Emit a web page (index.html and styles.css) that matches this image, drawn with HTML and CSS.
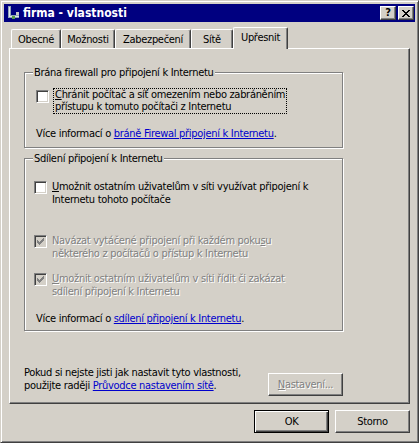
FILE: index.html
```
<!DOCTYPE html>
<html>
<head>
    <meta charset='utf-8'>
    <title>firma - vlastnosti</title>
    <meta name='viewport' content='width=device-width, initial-scale=1'>
    <link rel="stylesheet" href="styles.css">
</head>
<body>
    <div class="okno">
        <div class="titulek">
            <svg class="ikona" width="16" height="16" viewBox="0 0 16 16">
                <path d="M3 1h3v9h8v3H3z" fill="#8fa3b8"/>
                <path d="M4 2h1v9h9v1H4z" fill="#dfe6ee"/>
                <rect x="7" y="11" width="3" height="3" fill="#5b9c4b"/>
                <rect x="11" y="7" width="3" height="3" fill="#c9c9c9"/>
            </svg>
            <span class="titulek-text">firma - vlastnosti</span>
            <div class="titulek-tlacitka">
                <span class="tbtn otaznik">?</span>
                <span class="tbtn">
                    <svg width="8" height="7" viewBox="0 0 8 7">
                        <path d="M0 0h2v1h1v1h2V1h1V0h2v1H7v1H6v1H5v1h1v1h1v1h1v1H6V6H5V5H3v1H2v1H0V6h1V5h1V4h1V3H2V2H1V1H0z" fill="#000"/>
                    </svg>
                </span>
            </div>
        </div>
        <div class="obsah">
            <div class="zalozky">
                <div class="zalozka z-obecne">Obecné</div>
                <div class="zalozka z-moznosti">Možnosti</div>
                <div class="zalozka z-zabezpeceni">Zabezpečení</div>
                <div class="zalozka z-site">Sítě</div>
                <div class="zalozka z-upresnit vybrana">Upřesnit</div>
            </div>
            <div class="panel">
                <div class="skupina firewall">
                    <span class="legenda">Brána firewall pro připojení k Internetu</span>
                    <div class="volba">
                        <span class="chk"></span>
                        <span class="popis fokus"><u>C</u>hránit počítač a síť omezením nebo zabráněním<br>přístupu k tomuto počítači z Internetu</span>
                    </div>
                    <div class="info info-fw">Více informací o <a href="#">bráně Firewal připojení k Internetu</a>.</div>
                </div>
                <div class="skupina sdileni">
                    <span class="legenda">Sdílení připojení k Internetu</span>
                    <div class="volba">
                        <span class="chk"></span>
                        <span class="popis"><u>U</u>možnit ostatním uživatelům v síti využívat připojení k<br>Internetu tohoto počítače</span>
                    </div>
                    <div class="volba zakazano volba-vytacene">
                        <span class="chk">
                            <svg width="11" height="11" viewBox="0 0 11 11">
                                <path d="M2 4h1v3H2zM3 5h1v3H3zM4 6h1v3H4zM5 5h1v3H5zM6 4h1v3H6zM7 3h1v3H7zM8 2h1v3H8z" fill="#808080"/>
                            </svg>
                        </span>
                        <span class="popis">Navázat vytáčené připojení při každém poku<u>s</u>u<br>některého z počítačů o přístup k Internetu</span>
                    </div>
                    <div class="volba zakazano volba-rizeni">
                        <span class="chk">
                            <svg width="11" height="11" viewBox="0 0 11 11">
                                <path d="M2 4h1v3H2zM3 5h1v3H3zM4 6h1v3H4zM5 5h1v3H5zM6 4h1v3H6zM7 3h1v3H7zM8 2h1v3H8z" fill="#808080"/>
                            </svg>
                        </span>
                        <span class="popis"><u>U</u>možnit ostatním uživatelům v síti řídit či zakázat<br>sdílení připojení k Internetu</span>
                    </div>
                    <div class="info info-sd">Více informací o <a href="#">sdílení připojení k Internetu</a>.</div>
                </div>
                <div class="pruvodce">
                    <div class="pruvodce-text">Pokud si nejste jisti jak nastavit tyto vlastnosti,<br>použijte raději <a href="#">Průvodce nastavením sítě</a>.</div>
                    <span class="tlacitko neaktivni"><u>N</u>astavení...</span>
                </div>
            </div>
            <div class="tlacitka">
                <span class="tlacitko vychozi">OK</span>
                <span class="tlacitko">Storno</span>
            </div>
        </div>
    </div>
</body>
</html>
```
FILE: styles.css
```
html, body {
    margin: 0;
    background-color: #d4d0c8;
}
body {
    font-family: "DejaVu Sans Condensed", "DejaVu Sans", "Liberation Sans", sans-serif;
    font-stretch: condensed;
    font-size: 11px;
    letter-spacing: -0.3px;
    color: #000;
}
.okno {
    width: 419px;
    height: 443px;
    box-sizing: border-box;
    border: 1px solid;
    border-color: #d4d0c8 #404040 #404040 #d4d0c8;
    box-shadow: inset 1px 1px 0 #fff, inset -1px -1px 0 #808080;
    padding: 3px;
    background-color: #d4d0c8;
}
.titulek {
    height: 18px;
    background-color: #000080;
    display: flex;
    align-items: center;
}
.ikona {
    margin-left: 1px;
}
.titulek-text {
    margin-left: 2px;
    color: #fff;
    font-weight: bold;
    font-size: 12px;
    letter-spacing: 0;
}
.titulek-tlacitka {
    margin-left: auto;
    padding-right: 1px;
    display: flex;
    gap: 2px;
}
.tbtn {
    width: 16px;
    height: 14px;
    box-sizing: border-box;
    border: 1px solid;
    border-color: #fff #404040 #404040 #fff;
    box-shadow: inset -1px -1px 0 #808080;
    background-color: #d4d0c8;
    display: flex;
    align-items: center;
    justify-content: center;
}
.otaznik {
    font-weight: bold;
    font-size: 11px;
    line-height: 12px;
    padding-bottom: 1px;
}
.obsah {
    padding: 5px 5px 0 5px;
}
.zalozky {
    height: 21px;
    padding-left: 2px;
    display: flex;
    align-items: flex-end;
}
.zalozka {
    height: 19px;
    box-sizing: border-box;
    border-top: 1px solid #fff;
    border-left: 1px solid #fff;
    border-right: 1px solid #404040;
    border-top-left-radius: 2px;
    border-top-right-radius: 2px;
    box-shadow: inset -1px 0 0 #808080;
    padding-top: 3px;
    line-height: 13px;
    text-align: center;
}
.z-obecne { width: 50px; }
.z-moznosti { width: 54px; }
.z-zabezpeceni { width: 76px; }
.z-site { width: 42px; }
.z-upresnit { width: 55px; }
.vybrana {
    height: 22px;
    margin-bottom: -1px;
    position: relative;
    z-index: 1;
    background-color: #d4d0c8;
}
.panel {
    height: 356px;
    box-sizing: border-box;
    border: 1px solid;
    border-color: #fff #404040 #404040 #fff;
    box-shadow: inset -1px -1px 0 #808080;
    padding: 23px 0 0 14px;
}
.skupina {
    position: relative;
    width: 319px;
    box-sizing: border-box;
    border: 1px solid #808080;
    box-shadow: inset 1px 1px 0 #fff, 1px 1px 0 #fff;
}
.legenda {
    position: absolute;
    top: -7px;
    left: 8px;
    padding: 0 1px;
    line-height: 13px;
    background-color: #d4d0c8;
}
.firewall {
    height: 76px;
    padding: 15px 0 0 11px;
}
.sdileni {
    height: 173px;
    margin-top: 10px;
    padding: 21px 0 0 9px;
}
.volba {
    display: flex;
    align-items: flex-start;
}
.chk {
    width: 13px;
    height: 13px;
    flex: none;
    box-sizing: border-box;
    border: 1px solid;
    border-color: #808080 #fff #fff #808080;
    box-shadow: inset 1px 1px 0 #404040, inset -1px -1px 0 #d4d0c8;
    background-color: #fff;
    margin-top: 1px;
}
.chk svg {
    display: block;
}
.popis {
    margin-left: 5px;
    line-height: 13px;
    white-space: nowrap;
}
.fokus {
    margin-left: 4px;
    border: 1px dotted #000;
    padding: 0 1px;
    line-height: 12px;
}
.firewall .chk {
    margin-top: 2px;
}
.zakazano .chk {
    background-color: #d4d0c8;
}
.zakazano .popis {
    color: #808080;
    text-shadow: 1px 1px 0 #fff;
}
.volba-vytacene {
    margin-top: 28px;
}
.volba-rizeni {
    margin-top: 12px;
}
.info {
    line-height: 13px;
}
.info-fw {
    margin-top: 13px;
}
.info-sd {
    margin-top: 14px;
    margin-left: 2px;
}
a {
    color: #0000cc;
}
.pruvodce {
    width: 319px;
    margin-top: 35px;
    display: flex;
    justify-content: space-between;
    align-items: flex-start;
}
.pruvodce-text {
    line-height: 13px;
    white-space: nowrap;
}
.tlacitko {
    width: 75px;
    height: 23px;
    box-sizing: border-box;
    border: 1px solid;
    border-color: #fff #404040 #404040 #fff;
    box-shadow: inset -1px -1px 0 #808080;
    background-color: #d4d0c8;
    display: flex;
    align-items: center;
    justify-content: center;
}
.neaktivni {
    margin-top: 7px;
    color: #808080;
    text-shadow: 1px 1px 0 #fff;
}
.tlacitka {
    margin-top: 6px;
    display: flex;
    justify-content: flex-end;
    gap: 6px;
}
.vychozi {
    border-color: #000;
    box-shadow: inset 1px 1px 0 #fff, inset -1px -1px 0 #404040, inset -2px -2px 0 #808080;
}
```
